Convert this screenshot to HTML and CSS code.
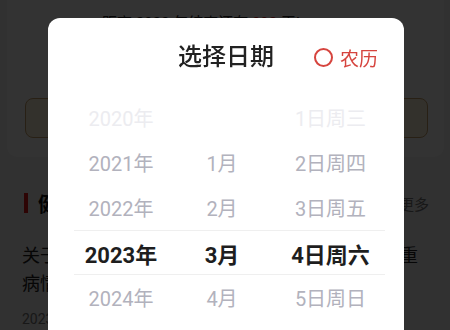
FILE: index.html
```html
<!DOCTYPE html>
<html lang="zh-CN">
<head>
<meta charset="utf-8">
<title>选择日期</title>
<link rel="stylesheet" href="styles.css">
</head>
<body>
<div class="page">
  <div class="top-card">
    <p class="countdown">距离 2023 年结束还有 <span class="num">302</span> 天!</p>
    <div class="sign-btn">立即签到领取健康积分</div>
  </div>
  <section class="news">
    <div class="news-head">
      <span class="bar"></span>
      <h2 class="news-title">健康资讯</h2>
      <span class="more">更多</span>
    </div>
    <article class="news-item">
      <p class="news-text">关于春季呼吸道传染病高发期间儿童如何避免加重病情的健康提示</p>
      <p class="news-date">2023-03-04</p>
    </article>
  </section>
</div>

<div class="mask"></div>

<div class="dialog">
  <div class="dialog-head">
    <h1 class="dialog-title">选择日期</h1>
    <div class="lunar"><span class="radio"></span><span class="lunar-text">农历</span></div>
  </div>
  <div class="picker">
    <div class="row far"><span>2020年</span><span></span><span>1日周三</span></div>
    <div class="row"><span>2021年</span><span>1月</span><span>2日周四</span></div>
    <div class="row"><span>2022年</span><span>2月</span><span>3日周五</span></div>
    <div class="row selected"><span>2023年</span><span>3月</span><span>4日周六</span></div>
    <div class="row"><span>2024年</span><span>4月</span><span>5日周日</span></div>
  </div>
</div>
</body>
</html>
```
FILE: styles.css
```css
* { box-sizing: border-box; }
html, body {
  margin: 0;
  padding: 0;
}
body {
  width: 450px;
  height: 330px;
  overflow: hidden;
  position: relative;
  font-family: Roboto, "Noto Sans CJK SC", sans-serif;
  background: #f2f2f2;
}
.page {
  height: 330px;
  padding: 0 6px 0 7px;
}
.top-card {
  background: #ffffff;
  border-radius: 0 0 10px 10px;
  padding: 13px 16px 19px 18px;
}
.countdown {
  margin: 0 0 0 77px;
  font-size: 15px;
  line-height: 20px;
  color: #222;
}
.countdown .num { color: #e02a2a; }
.sign-btn {
  margin-top: 65px;
  height: 40px;
  border: 1px solid #c9a26c;
  background: #fff2da;
  border-radius: 8px;
  display: flex;
  align-items: center;
  justify-content: center;
  font-size: 15px;
  color: #8a5a20;
}
.news {
  padding: 36px 15px 0 17px;
}
.news-head {
  display: flex;
  align-items: center;
  height: 20px;
}
.bar {
  width: 4px;
  height: 20px;
  background: #e01818;
  margin-right: 10px;
}
.news-title {
  margin: 0;
  font-size: 20px;
  font-weight: 700;
  color: #111;
  flex: 1;
}
.more {
  font-size: 15px;
  color: #777;
}
.news-item {
  margin-top: 29px;
  margin-left: -2px;
}
.news-text {
  margin: 0;
  width: 400px;
  font-size: 18px;
  line-height: 28px;
  color: #222;
}
.news-date {
  margin: 11px 0 0;
  font-size: 14px;
  line-height: 20px;
  color: #777;
}

.mask {
  position: fixed;
  inset: 0;
  background: rgba(0, 0, 0, 0.8);
}
.dialog {
  position: absolute;
  top: 18px;
  left: 48px;
  width: 356px;
  height: 312px;
  background: #ffffff;
  border-radius: 12px 12px 0 0;
}
.dialog-head {
  position: relative;
  padding-top: 24px;
  height: 54px;
}
.dialog-title {
  margin: 0;
  text-align: center;
  font-size: 24px;
  line-height: 30px;
  font-weight: 500;
  color: #222;
}
.lunar {
  position: absolute;
  right: 26px;
  top: 24px;
  height: 30px;
  display: flex;
  align-items: center;
}
.radio {
  width: 19px;
  height: 19px;
  border: 2px solid #d6443e;
  border-radius: 50%;
  margin-right: 7px;
}
.lunar-text {
  font-size: 19px;
  color: #d6443e;
}
.picker {
  margin: 23px 0 0 26px;
  width: 311px;
}
.row {
  display: grid;
  grid-template-columns: 94px 108px 109px;
  height: 45px;
  align-items: center;
  text-align: center;
  font-size: 20px;
  color: #b2b2bd;
}
.row.far { color: #ececf0; }
.row.selected {
  font-size: 22px;
  font-weight: 700;
  color: #1e1e1e;
  border-top: 1px solid #efefef;
  border-bottom: 1px solid #efefef;
}
```
